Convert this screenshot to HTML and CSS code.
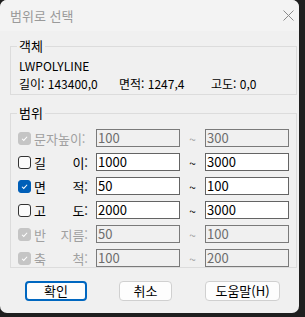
FILE: index.html
```html
<!DOCTYPE html>
<html lang="ko">
<head>
    <meta charset="UTF-8">
    <title>범위로 선택</title>
    <link rel="stylesheet" href="styles.css">
</head>
<body>
    <div class="window">
        <div class="titlebar">
            <span class="title">범위로 선택</span>
            <svg class="close" width="11" height="11" viewBox="0 0 11 11">
                <path d="M0.5 0.5 L10.5 10.5 M10.5 0.5 L0.5 10.5" stroke="#8a8a8a" stroke-width="1" fill="none"/>
            </svg>
        </div>
        <div class="client">
            <fieldset class="group group-object">
                <legend>객체</legend>
                <div class="line">LWPOLYLINE</div>
                <div class="line stats">
                    <span class="stat stat-len">길이: 143400,0</span>
                    <span class="stat stat-area">면적: 1247,4</span>
                    <span class="stat">고도: 0,0</span>
                </div>
            </fieldset>

            <fieldset class="group group-range">
                <legend>범위</legend>

                <div class="row disabled">
                    <span class="check on"><svg viewBox="0 0 13 13"><path d="M3.5 6.8 L5.6 8.8 L9.6 4.4" /></svg></span>
                    <span class="label"><span>문자높이:</span></span>
                    <span class="field">100</span>
                    <span class="tilde">~</span>
                    <span class="field">300</span>
                </div>

                <div class="row">
                    <span class="check"></span>
                    <span class="label"><span>길</span><span>이:</span></span>
                    <span class="field">1000</span>
                    <span class="tilde">~</span>
                    <span class="field">3000</span>
                </div>

                <div class="row">
                    <span class="check on"><svg viewBox="0 0 13 13"><path d="M3.5 6.8 L5.6 8.8 L9.6 4.4" /></svg></span>
                    <span class="label"><span>면</span><span>적:</span></span>
                    <span class="field">50</span>
                    <span class="tilde">~</span>
                    <span class="field">100</span>
                </div>

                <div class="row">
                    <span class="check"></span>
                    <span class="label"><span>고</span><span>도:</span></span>
                    <span class="field">2000</span>
                    <span class="tilde">~</span>
                    <span class="field">3000</span>
                </div>

                <div class="row disabled">
                    <span class="check on"><svg viewBox="0 0 13 13"><path d="M3.5 6.8 L5.6 8.8 L9.6 4.4" /></svg></span>
                    <span class="label"><span>반</span><span>지름:</span></span>
                    <span class="field">50</span>
                    <span class="tilde">~</span>
                    <span class="field">100</span>
                </div>

                <div class="row disabled">
                    <span class="check on"><svg viewBox="0 0 13 13"><path d="M3.5 6.8 L5.6 8.8 L9.6 4.4" /></svg></span>
                    <span class="label"><span>축</span><span>척:</span></span>
                    <span class="field">100</span>
                    <span class="tilde">~</span>
                    <span class="field">200</span>
                </div>
            </fieldset>

            <div class="buttons">
                <button type="button" class="btn btn-ok">확인</button>
                <button type="button" class="btn btn-cancel">취소</button>
                <button type="button" class="btn btn-help">도움말(H)</button>
            </div>
        </div>
    </div>
</body>
</html>
```

FILE: styles.css
```css
body {
    margin: 0;
    background-color: #1f1f1f;
    font-family: "Noto Sans CJK KR", "Noto Sans", sans-serif;
    font-size: 12px;
    color: #000;
}
.window {
    width: 299px;
    height: 313px;
    background: #f0f0f0;
    border-radius: 7px;
    overflow: hidden;
}
.titlebar {
    height: 31px;
    background: #f3f3f3;
    display: flex;
    align-items: center;
    justify-content: space-between;
    padding: 0 5px 0 10px;
}
.title {
    color: #9a9a9a;
    font-size: 13px;
    margin-top: -1px;
}
.close {
    margin-top: -1px;
}
.client {
    padding: 7px 2px 0 10px;
}
.group {
    margin: 0;
    padding: 0 7px;
    border: 1px solid #dcdcdc;
    min-width: 0;
}
.group legend {
    padding: 0 2px;
    margin-left: -1px;
    font-size: 13px;
    line-height: 16px;
}
.group-object {
    padding-top: 3px;
    padding-bottom: 1px;
}
.line {
    line-height: 18px;
    padding-left: 1px;
}
.stats {
    display: flex;
}
.stat-len {
    width: 100px;
}
.stat-area {
    width: 92px;
}
.group-range {
    margin-top: 10px;
    padding-top: 8px;
    padding-bottom: 0;
    display: flex;
    flex-direction: column;
    gap: 6px;
}
.row {
    display: flex;
    align-items: center;
    height: 18px;
}
.check {
    width: 11px;
    height: 11px;
    border: 1px solid #333;
    border-radius: 3px;
    background: #fbfbfb;
    display: flex;
}
.check svg {
    width: 11px;
    height: 11px;
    fill: none;
    stroke: #fff;
    stroke-width: 1.2;
}
.check.on {
    background: #005fb8;
    border-color: #005fb8;
}
.disabled .check.on {
    background: #c5c5c5;
    border-color: #c5c5c5;
}
.label {
    width: 54px;
    margin-left: 3px;
    display: flex;
    justify-content: space-between;
    font-size: 13px;
}
.field {
    width: 82px;
    height: 16px;
    margin-left: 8px;
    border: 1px solid #646464;
    background: #fff;
    line-height: 16px;
    padding-left: 1px;
    box-sizing: content-box;
    width: 81px;
    font-size: 13px;
}
.tilde {
    width: 25px;
    text-align: center;
}
.tilde + .field {
    margin-left: 0;
}
.disabled {
    color: #a0a0a0;
}
.disabled .field {
    background: #f0f0f0;
    border-color: #7a7a7a;
    color: #6d6d6d;
}
.buttons {
    display: flex;
    margin-top: 13px;
    padding-left: 15px;
}
.btn {
    height: 20px;
    font-family: inherit;
    font-size: 13px;
    line-height: 16px;
    background: #fdfdfd;
    border: 1px solid #d0d0d0;
    border-radius: 4px;
    padding: 0;
    color: #000;
}
.btn-ok {
    width: 62px;
    border: 2px solid #0067c0;
}
.btn-cancel {
    width: 53px;
    margin-left: 32px;
}
.btn-help {
    width: 75px;
    margin-left: 33px;
}
```
